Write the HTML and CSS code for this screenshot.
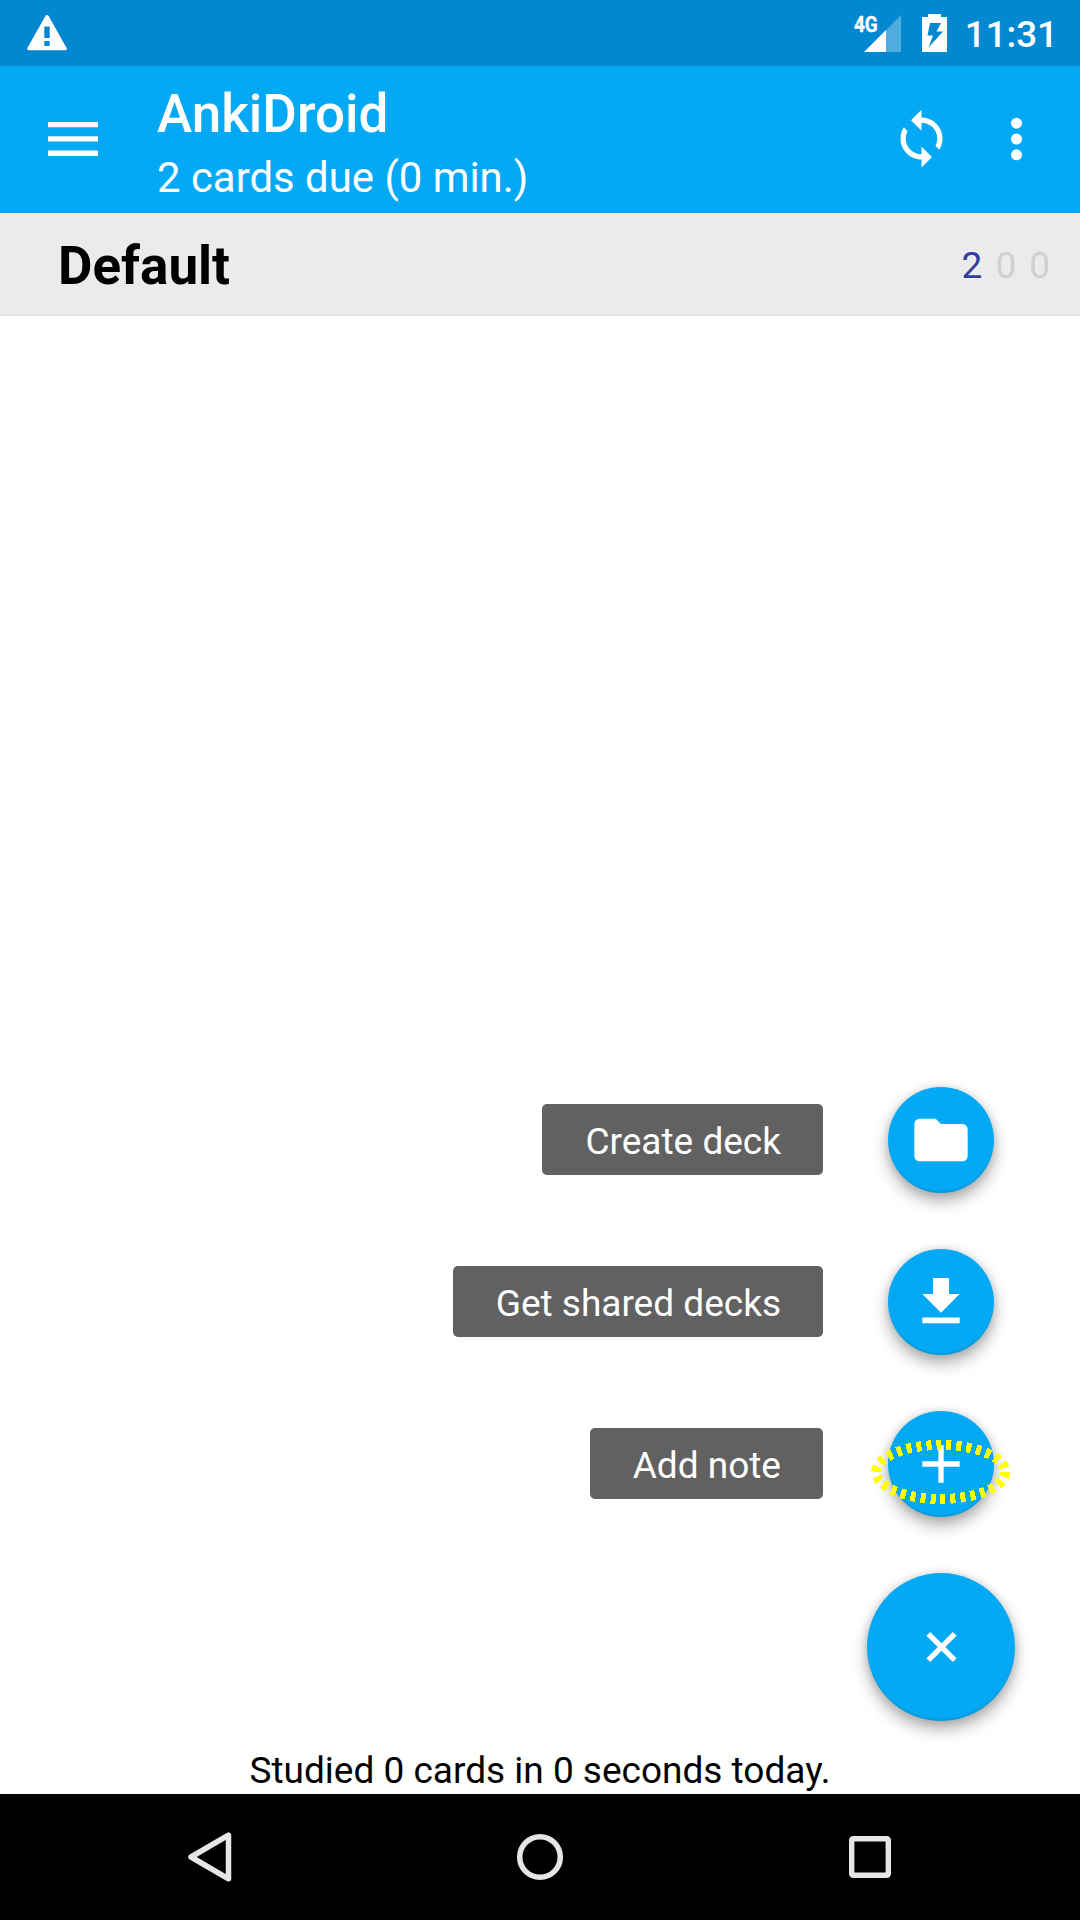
FILE: index.html
```html
<!DOCTYPE html>
<html lang="en">
<head>
<meta charset="utf-8">
<title>AnkiDroid</title>
<link rel="stylesheet" href="styles.css">
</head>
<body>
<div class="status-bar">
  <svg class="warning" width="40" height="37" viewBox="0 0 40 37"><path fill="#fff" fill-rule="evenodd" d="M18.700 1.600Q20 .2 21.300 1.600L39.600 34Q40.300 36.300 38 36.300H2Q-.3 36.300.4 34ZM17.300 12.500v11.500h5.400V12.500zm0 14.500v5h5.400v-5z"/></svg>
  <div class="indicators">
    <div class="signal">
      <span class="network">4G</span>
      <svg width="37" height="37" viewBox="0 0 37 37"><path fill="#fff" fill-opacity=".3" d="M22 15 37 0v37H22z"/><path fill="#fff" d="M0 37 22 15v22z"/></svg>
    </div>
    <svg class="battery" width="25" height="38" viewBox="0 0 25 38"><path fill="#fff" fill-rule="evenodd" d="M6 0h13v3h6v35H0V3h6zM8 9 5.500 21.500h5.500L6.500 33.500 21 17.500h-6.500L19 9z"/></svg>
    <span class="clock">11:31</span>
  </div>
</div>
<header class="toolbar">
  <svg class="menu" width="50" height="34" viewBox="0 0 50 34"><path fill="#fff" d="M0 0h50v5.300H0zM0 14.300h50v5.300H0zM0 28.600h50v5.300H0z"/></svg>
  <div class="titles">
    <h1 class="title">AnkiDroid</h1>
    <p class="subtitle">2 cards due (0 min.)</p>
  </div>
  <svg class="sync" width="63" height="63" viewBox="0 0 24 24"><path fill="#fff" d="M12 4V1L8 5l4 4V6c3.310 0 6 2.690 6 6 0 1.010-.25 1.970-.7 2.800l1.460 1.460C19.540 15.030 20 13.570 20 12c0-4.420-3.580-8-8-8zm0 14c-3.310 0-6-2.690-6-6 0-1.010.25-1.970.7-2.800L5.240 7.740C4.460 8.970 4 10.430 4 12c0 4.420 3.580 8 8 8v3l4-4-4-4v3z"/></svg>
  <svg class="more" width="12" height="44" viewBox="0 0 12 44"><g fill="#fff"><circle cx="5.500" cy="6.200" r="5.500"/><circle cx="5.500" cy="22" r="5.500"/><circle cx="5.500" cy="37.800" r="5.500"/></g></svg>
</header>
<main class="decks">
  <div class="deck">
    <span class="deck-name">Default</span>
    <span class="count new">2</span>
    <span class="count">0</span>
    <span class="count">0</span>
  </div>
  <p class="summary">Studied 0 cards in 0 seconds today.</p>
  <div class="fab-menu">
    <div class="action">
      <span class="label">Create deck</span>
      <div class="fab"><svg width="64" height="64" viewBox="0 0 24 24"><path fill="#fff" d="M10 4H4c-1.100 0-1.990.9-1.990 2L2 18c0 1.100.9 2 2 2h16c1.100 0 2-.9 2-2V8c0-1.100-.9-2-2-2h-8z"/></svg></div>
    </div>
    <div class="action">
      <span class="label">Get shared decks</span>
      <div class="fab"><svg width="64" height="64" viewBox="0 0 24 24"><path fill="#fff" d="M19 9h-4V3H9v6H5l7 7zM5 17.800v2.200h14v-2.200z"/></svg></div>
    </div>
    <div class="action">
      <span class="label">Add note</span>
      <div class="fab">
        <svg width="64" height="64" viewBox="0 0 24 24"><path fill="#fff" d="M19 13h-6v6h-2v-6H5v-2h6V5h2v6h6z"/></svg>
        <svg class="highlight" width="140" height="66" viewBox="0 0 140 66"><ellipse cx="69.700" cy="33" rx="64.500" ry="27" fill="none" stroke="#ff0" stroke-width="10" stroke-dasharray="5 5" shape-rendering="crispEdges"/></svg>
      </div>
    </div>
    <div class="fab large"><svg width="64" height="64" viewBox="0 0 24 24"><path fill="#fff" transform="translate(.2 0) rotate(45 12 12)" d="M19 13h-6v6h-2v-6H5v-2h6V5h2v6h6z"/></svg></div>
  </div>
</main>
<nav class="nav-bar">
  <svg width="50" height="54" viewBox="0 0 50 54"><path fill="none" stroke="#e6e6e6" stroke-width="5.500" stroke-linejoin="round" d="M6 27 43.500 5.200v43.600z"/></svg>
  <svg width="50" height="54" viewBox="0 0 50 54"><circle cx="25" cy="27" r="20.300" fill="none" stroke="#e6e6e6" stroke-width="5.500"/></svg>
  <svg width="50" height="54" viewBox="0 0 50 54"><rect x="6.700" y="8.700" width="36.600" height="36.600" rx="1.500" fill="none" stroke="#e6e6e6" stroke-width="5.400"/></svg>
</nav>
</body>
</html>
```
FILE: styles.css
```css
* {
  box-sizing: border-box;
}

body {
  margin: 0;
  width: 1080px;
  height: 1920px;
  display: flex;
  flex-direction: column;
  overflow: hidden;
  background: #fff;
  color: #000;
  font-family: Roboto, sans-serif;
  font-size: 37px;
  line-height: 43px;
}

svg {
  display: block;
  flex: none;
}

h1,
p {
  margin: 0;
}

.status-bar {
  height: 66px;
  flex: none;
  display: flex;
  align-items: flex-start;
  justify-content: space-between;
  padding: 14px 22px 0 27px;
  background: #0288d1;
  color: #fff;
}

.indicators {
  display: flex;
}

.signal {
  position: relative;
  padding-top: 1px;
  margin-right: 21px;
}

.network {
  position: absolute;
  left: -10px;
  top: 0;
  font-size: 22.500px;
  line-height: 20px;
  font-weight: 700;
  -webkit-text-stroke: 0.4px #fff;
  transform: scaleX(0.84);
  transform-origin: left;
}

.clock {
  margin-left: 18px;
  margin-top: -1px;
  font-size: 36.75px;
  font-weight: 500;
}

.toolbar {
  height: 147px;
  flex: none;
  display: flex;
  align-items: flex-start;
  padding: 0 57px 0 48px;
  background: #03a9f4;
  color: #fff;
}

.menu {
  margin-top: 56px;
}

.titles {
  flex: 1;
  padding: 17px 0 0 59px;
}

.title {
  font-size: 53px;
  font-weight: 500;
  line-height: 62px;
}

.subtitle {
  padding-top: 5px;
  font-size: 41.900px;
  line-height: 56px;
}

.sync {
  margin-top: 41px;
}

.more {
  margin-top: 51px;
  margin-left: 58px;
}

.decks {
  position: relative;
  flex: 1;
  display: flex;
  flex-direction: column;
  justify-content: space-between;
}

.deck {
  height: 103px;
  display: flex;
  align-items: center;
  gap: 13px;
  padding: 2px 30px 0 58px;
  background: #ebebeb;
  border-bottom: 1px solid #e0e0e0;
}

.deck-name {
  flex: 1;
  padding-top: 2px;
  font-size: 53px;
  font-weight: 700;
}

.count {
  color: #d0d0d0;
}

.count.new {
  color: #303f9f;
}

.summary {
  text-align: center;
  padding-bottom: 2px;
}

/* Floating action menu over the deck list */
.fab-menu {
  position: absolute;
  right: 65px;
  bottom: 73px;
  display: flex;
  flex-direction: column;
  align-items: flex-end;
  gap: 56px;
}

.action {
  display: flex;
  align-items: flex-start;
  gap: 65px;
  padding-right: 21px;
}

.label {
  height: 71px;
  margin-top: 17px;
  padding: 16px 42px 0 43px;
  border-radius: 5px;
  background: #616161;
  color: #fff;
  white-space: nowrap;
}

.fab {
  position: relative;
  width: 106px;
  height: 106px;
  display: flex;
  align-items: center;
  justify-content: center;
  border-radius: 50%;
  background: #03a9f4;
  box-shadow: 0 8px 16px rgba(0, 0, 0, 0.32), 0 0 9px rgba(0, 0, 0, 0.12), inset 0 -3px 2px -1px rgba(0, 0, 0, 0.1);
}

.fab.large {
  width: 148px;
  height: 148px;
}

.highlight {
  position: absolute;
  left: -17px;
  top: 28px;
}

.nav-bar {
  height: 126px;
  flex: none;
  display: flex;
  align-items: center;
  justify-content: space-between;
  padding: 0 185px;
  background: #000;
}
```
